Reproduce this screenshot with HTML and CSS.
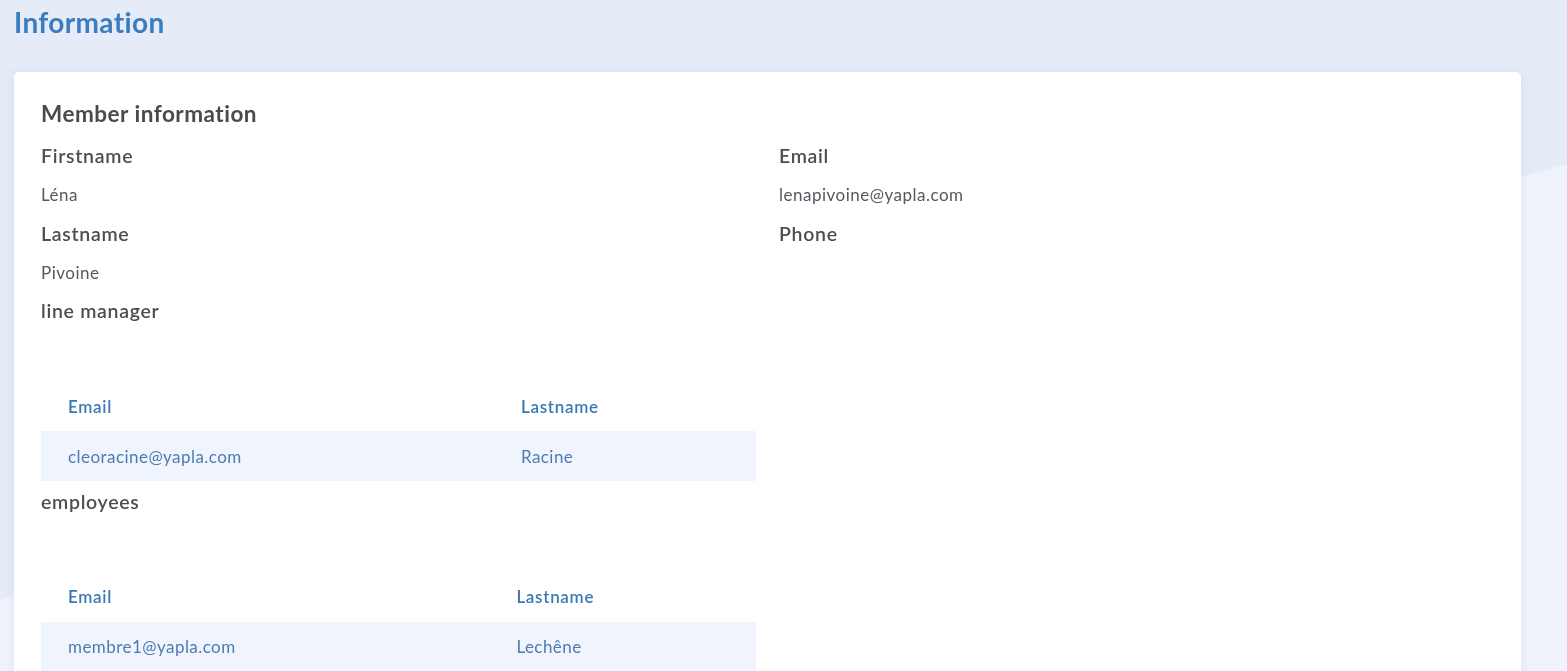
FILE: index.html
```html
<html>
<head>
<link rel="stylesheet" href="styles.css">
</head>
<body>
<div class="page">
	<h1 class="page-title">Information</h1>
	<div class="card">
		<h3 class="card-title">Member information</h3>
		<div class="fields">
			<div class="col">
				<div class="field">
					<div class="label">Firstname</div>
					<div class="value">Léna</div>
				</div>
				<div class="field">
					<div class="label">Lastname</div>
					<div class="value">Pivoine</div>
				</div>
				<div class="field">
					<div class="label">line manager</div>
					<table class="list">
						<thead>
							<tr><th>Email</th><th>Lastname</th></tr>
						</thead>
						<tbody>
							<tr><td>cleoracine@yapla.com</td><td>Racine</td></tr>
						</tbody>
					</table>
				</div>
				<div class="field">
					<div class="label">employees</div>
					<table class="list">
						<thead>
							<tr><th>Email</th><th>Lastname</th></tr>
						</thead>
						<tbody>
							<tr><td>membre1@yapla.com</td><td>Lechêne</td></tr>
						</tbody>
					</table>
				</div>
			</div>
			<div class="col">
				<div class="field">
					<div class="label">Email</div>
					<div class="value">lenapivoine@yapla.com</div>
				</div>
				<div class="field">
					<div class="label">Phone</div>
				</div>
			</div>
		</div>
	</div>
</div>
</body>
</html>
```

FILE: styles.css
```css
html,body {
	margin: 0;
	padding: 0;
	height: 100%;
	overflow: hidden;
	background: #eef3fc;
	font-family: Lato, "Open Sans", sans-serif;
	color: #4e4e4e;
}
body::before {
	content: "";
	position: fixed;
	top: 0;
	left: 0;
	right: 0;
	bottom: 0;
	background: #e5ebf7;
	clip-path: polygon(0 0, 100% 0, 100% 164px, 0 600px);
}
.page {
	position: relative;
	padding: 0 46px 0 14px;
}
.page-title {
	margin: 0;
	height: 72px;
	line-height: 44px;
	font-size: 28px;
	font-weight: 700;
	letter-spacing: 0.35px;
	color: #3a7cbd;
}
.card {
	background: #fff;
	border-radius: 5px;
	box-shadow: 0 0 10px rgba(160,180,220,0.25);
	padding: 27px 27px 40px 27px;
}
.card-title {
	margin: 0 0 15px 0;
	line-height: 30px;
	font-size: 22.5px;
	font-weight: 700;
	letter-spacing: 0.5px;
	color: #4a4a4a;
}
.fields {
	display: grid;
	grid-template-columns: 1fr 1fr;
	column-gap: 23px;
	align-items: start;
}
.field {
	margin-bottom: 14.5px;
}
.label {
	line-height: 24px;
	font-size: 19.5px;
	font-weight: 600;
	letter-spacing: 0.7px;
	color: #4e4e4e;
}
.value {
	margin-top: 15px;
	line-height: 24px;
	font-size: 17px;
	letter-spacing: 0.5px;
	color: #5b5560;
}
.list {
	width: 100%;
	border-collapse: collapse;
	margin: 58px 0 -6px 0;
	font-size: 17px;
}
.list th,
.list td {
	height: 50px;
	padding: 0 27px;
	text-align: left;
	white-space: nowrap;
}
.list th {
	font-weight: 600;
	letter-spacing: 0.7px;
	color: #3a78b4;
}
.list td {
	background: #eff4fd;
	letter-spacing: 0.45px;
	color: #4d7bb2;
}
```
